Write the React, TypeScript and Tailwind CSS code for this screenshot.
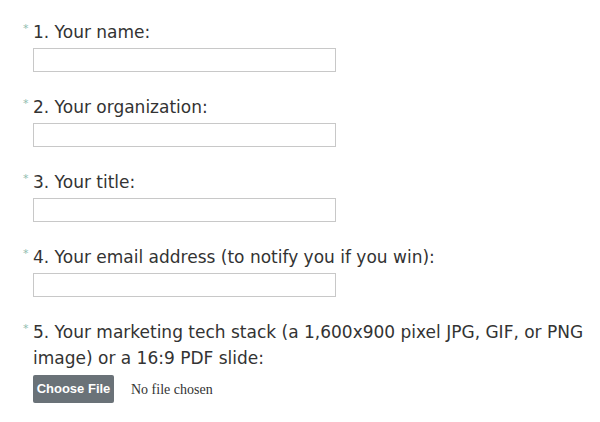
const fields = [
  "1. Your name:",
  "2. Your organization:",
  "3. Your title:",
  "4. Your email address (to notify you if you win):",
];

function Label({ children }: { children: React.ReactNode }) {
  return (
    <div className="relative text-[17px] leading-[26px] text-[#333]">
      <span className="absolute -left-[10px] top-[-3px] text-[11px] text-[#8fbcae]">*</span>
      {children}
    </div>
  );
}

export default function App() {
  return (
    <div className="min-h-[422px] bg-white pl-[33px] pt-[19px] font-['DejaVu_Sans',sans-serif]">
      <div className="flex flex-col gap-[22px]">
        {fields.map((f) => (
          <div key={f} className="flex flex-col gap-[3px]">
            <Label>{f}</Label>
            <input
              type="text"
              className="h-[24px] w-[303px] border border-[#c8c8c8] bg-white"
            />
          </div>
        ))}
        <div className="flex flex-col gap-[4px]">
          <Label>
            5. Your marketing tech stack (a 1,600x900 pixel JPG, GIF, or PNG
            <br />
            image) or a 16:9 PDF slide:
          </Label>
          <div className="flex items-center gap-[17px]">
            <button className="h-[28px] w-[81px] rounded-[2px] bg-[#6a7278] font-['Liberation_Sans',sans-serif] text-[13px] font-bold text-white">
              Choose File
            </button>
            <span className="font-['Liberation_Serif',serif] text-[14px] text-[#333]">No file chosen</span>
          </div>
        </div>
      </div>
    </div>
  );
}
